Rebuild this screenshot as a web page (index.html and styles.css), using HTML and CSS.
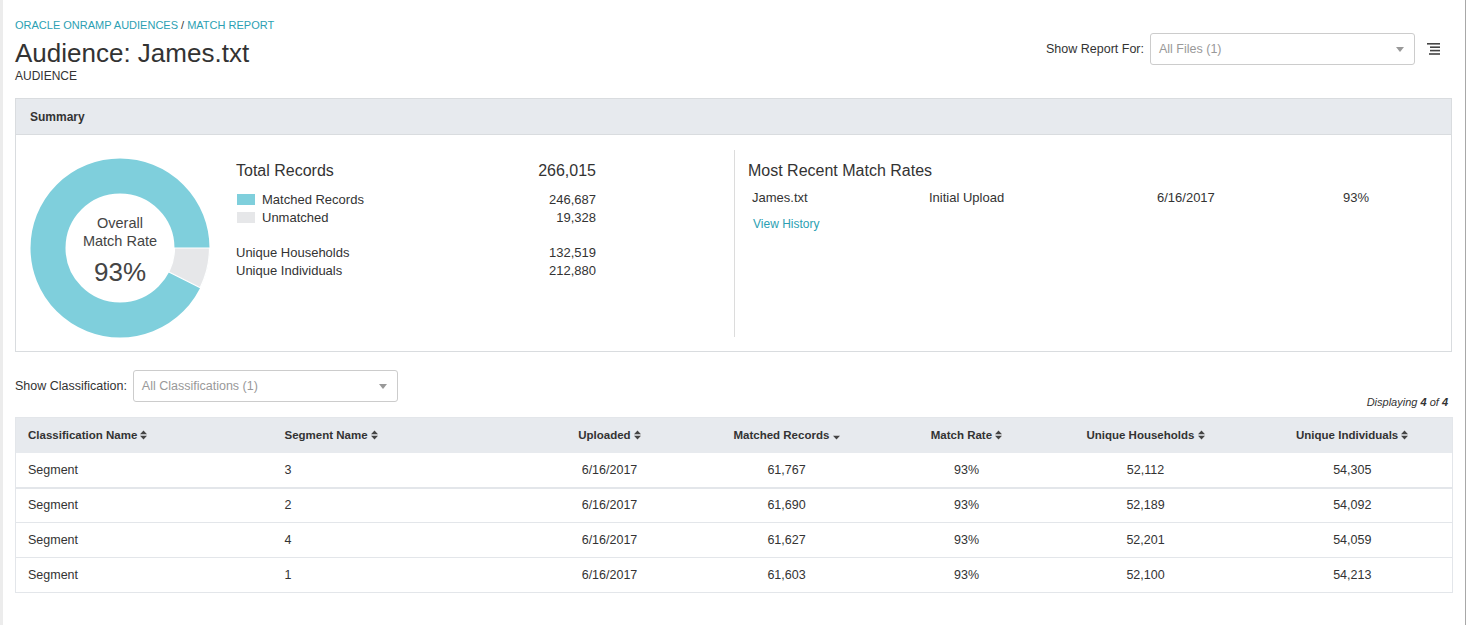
FILE: index.html
```html
<!DOCTYPE html>
<html>
<head>
<meta charset="utf-8">
<link rel="stylesheet" href="styles.css">
</head>
<body>
<div class="page">
  <header class="top">
    <div class="titles">
      <div class="crumbs"><a>ORACLE ONRAMP AUDIENCES</a> / <a>MATCH REPORT</a></div>
      <h1>Audience: James.txt</h1>
      <div class="subtitle">AUDIENCE</div>
    </div>
    <div class="top-right">
      <span class="label">Show Report For:</span>
      <div class="select select-files"><span>All Files (1)</span><i class="caret"></i></div>
      <svg class="menu-icon" width="13" height="12" viewBox="0 0 13 12">
        <rect x="0" y="0" width="13" height="1.6" fill="#444"/>
        <rect x="3" y="3.4" width="10" height="1.6" fill="#444"/>
        <rect x="3" y="6.8" width="10" height="1.6" fill="#444"/>
        <rect x="2" y="10.2" width="11" height="1.6" fill="#444"/>
      </svg>
    </div>
  </header>

  <section class="panel">
    <div class="panel-head">Summary</div>
    <div class="panel-body">
      <div class="donut">
        <svg width="180" height="180" viewBox="0 0 180 180">
          <circle cx="90" cy="90" r="72" fill="none" stroke="#7fcfdc" stroke-width="35"/>
          <path d="M179.5 90 A89.5 89.5 0 0 1 170.2 129.7 L138.9 114.1 A54.5 54.5 0 0 0 144.5 90 Z" fill="#e6e7e9" stroke="#fff" stroke-width="1.2"/>
        </svg>
        <div class="donut-text">
          <div class="dl">Overall</div>
          <div class="dl">Match Rate</div>
          <div class="dpct">93%</div>
        </div>
      </div>
      <div class="stats">
        <div class="stat-total"><span>Total Records</span><span>266,015</span></div>
        <div class="stat-row first"><span><i class="sw sw-teal"></i>Matched Records</span><span>246,687</span></div>
        <div class="stat-row"><span><i class="sw sw-grey"></i>Unmatched</span><span>19,328</span></div>
        <div class="stat-row gap"><span>Unique Households</span><span>132,519</span></div>
        <div class="stat-row"><span>Unique Individuals</span><span>212,880</span></div>
      </div>
      <div class="recent">
        <div class="recent-title">Most Recent Match Rates</div>
        <div class="recent-row"><span>James.txt</span><span>Initial Upload</span><span>6/16/2017</span><span>93%</span></div>
        <a class="history">View History</a>
      </div>
    </div>
  </section>

  <div class="toolbar">
    <div class="tool-left">
      <span class="label">Show Classification:</span>
      <div class="select select-class"><span>All Classifications (1)</span><i class="caret"></i></div>
    </div>
    <div class="displaying">Displaying <b>4</b> of <b>4</b></div>
  </div>

  <table class="grid">
    <colgroup>
      <col style="width:257px"><col style="width:268px"><col style="width:138px"><col style="width:216px"><col style="width:144px"><col style="width:214px"><col style="width:200px">
    </colgroup>
    <thead>
      <tr>
        <th class="l">Classification Name <svg class="sort" width="7" height="10" viewBox="0 0 7 10"><path d="M0 4.2h7L3.5 0.4z M0 5.8h7L3.5 9.6z"/></svg></th>
        <th class="l">Segment Name <svg class="sort" width="7" height="10" viewBox="0 0 7 10"><path d="M0 4.2h7L3.5 0.4z M0 5.8h7L3.5 9.6z"/></svg></th>
        <th>Uploaded <svg class="sort" width="7" height="10" viewBox="0 0 7 10"><path d="M0 4.2h7L3.5 0.4z M0 5.8h7L3.5 9.6z"/></svg></th>
        <th>Matched Records <svg class="sort" width="7" height="10" viewBox="0 0 7 10"><path d="M0 5.8h7L3.5 9.6z"/></svg></th>
        <th>Match Rate <svg class="sort" width="7" height="10" viewBox="0 0 7 10"><path d="M0 4.2h7L3.5 0.4z M0 5.8h7L3.5 9.6z"/></svg></th>
        <th>Unique Households <svg class="sort" width="7" height="10" viewBox="0 0 7 10"><path d="M0 4.2h7L3.5 0.4z M0 5.8h7L3.5 9.6z"/></svg></th>
        <th>Unique Individuals <svg class="sort" width="7" height="10" viewBox="0 0 7 10"><path d="M0 4.2h7L3.5 0.4z M0 5.8h7L3.5 9.6z"/></svg></th>
      </tr>
    </thead>
    <tbody>
      <tr><td class="l">Segment</td><td class="l">3</td><td>6/16/2017</td><td>61,767</td><td>93%</td><td>52,112</td><td>54,305</td></tr>
      <tr><td class="l">Segment</td><td class="l">2</td><td>6/16/2017</td><td>61,690</td><td>93%</td><td>52,189</td><td>54,092</td></tr>
      <tr><td class="l">Segment</td><td class="l">4</td><td>6/16/2017</td><td>61,627</td><td>93%</td><td>52,201</td><td>54,059</td></tr>
      <tr><td class="l">Segment</td><td class="l">1</td><td>6/16/2017</td><td>61,603</td><td>93%</td><td>52,100</td><td>54,213</td></tr>
    </tbody>
  </table>
</div>
</body>
</html>
```

FILE: styles.css
```css
* { box-sizing: border-box; }
html, body { margin: 0; padding: 0; background: #fff; }
body {
  font-family: "Liberation Sans", Arial, Helvetica, sans-serif;
  color: #333;
}
.page {
  width: 1466px;
  min-height: 625px;
  border-left: 3px solid #ececec;
  border-right: 1px solid #a8a8a8;
  padding: 19px 13px 0 12px;
}
.top {
  display: flex;
  justify-content: space-between;
  align-items: flex-start;
}
.crumbs {
  font-size: 11px;
  line-height: 13px;
  color: #333;
}
.crumbs a { color: #2c9fb3; }
h1 {
  margin: 6px 0 0;
  font-size: 26px;
  line-height: 30px;
  font-weight: normal;
  color: #333;
}
.subtitle {
  margin-top: 1px;
  font-size: 12px;
  line-height: 14px;
}
.top-right {
  display: flex;
  align-items: center;
  margin-top: 14px;
}
.label {
  font-size: 12.5px;
  color: #333;
}
.select {
  display: flex;
  align-items: center;
  justify-content: space-between;
  height: 32px;
  border: 1px solid #ccc;
  border-radius: 3px;
  padding: 0 10px 0 8px;
  font-size: 12.5px;
  color: #999;
  background: #fff;
}
.caret {
  width: 0; height: 0;
  border-left: 4.5px solid transparent;
  border-right: 4.5px solid transparent;
  border-top: 5px solid #999;
}
.select-files { width: 265px; margin-left: 6px; }
.menu-icon { margin-left: 12px; margin-right: 12px; }

.panel {
  margin-top: 15px;
  border: 1px solid #d9dcdf;
}
.panel-head {
  height: 36px;
  background: #e7eaee;
  border-bottom: 1px solid #d9dcdf;
  padding-left: 14px;
  font-size: 12px;
  font-weight: bold;
  line-height: 36px;
  color: #333;
}
.panel-body {
  display: flex;
  padding: 15px 14px 14px;
  height: 216px;
}
.donut {
  position: relative;
  width: 180px;
  height: 180px;
  margin-top: 8px;
  flex: none;
}
.donut svg { display: block; }
.donut-text {
  position: absolute;
  inset: 0;
  display: flex;
  flex-direction: column;
  align-items: center;
  justify-content: center;
  color: #444;
  padding-top: 5px;
}
.dl { font-size: 14.5px; line-height: 18px; }
.dpct { font-size: 26px; line-height: 30px; margin-top: 7px; }

.stats {
  width: 360px;
  margin-left: 26px;
  padding-top: 11px;
  flex: none;
}
.stat-total {
  display: flex;
  justify-content: space-between;
  font-size: 16px;
  line-height: 20px;
}
.stat-row {
  display: flex;
  justify-content: space-between;
  font-size: 13px;
  line-height: 17.5px;
}
.stat-row span:first-child { display: flex; align-items: center; }
.stat-row.first { margin-top: 10px; }
.stat-row.gap { margin-top: 18px; }
.sw { display: inline-block; width: 18px; height: 11px; margin-right: 7px; margin-left: 1px; }
.sw-teal { background: #7fcfdc; }
.sw-grey { background: #e6e7e9; }

.recent {
  margin-left: 138px;
  border-left: 1px solid #dcdcdc;
  padding: 11px 0 0 13px;
  flex: 1;
}
.recent-title { font-size: 16px; line-height: 20px; }
.recent-row {
  display: grid;
  grid-template-columns: 177px 228px 186px auto;
  margin-top: 8px;
  padding-left: 4px;
  font-size: 13px;
  line-height: 18px;
}
.history {
  display: block;
  margin-top: 9px;
  padding-left: 5px;
  font-size: 12px;
  line-height: 16px;
  color: #2c9fb3;
}

.toolbar {
  display: flex;
  justify-content: space-between;
  align-items: flex-end;
  margin-top: 18px;
}
.tool-left { display: flex; align-items: center; }
.select-class { width: 265px; margin-left: 6px; }
.displaying {
  font-size: 11px;
  font-style: italic;
  line-height: 14px;
  margin-bottom: -7px;
  margin-right: 4px;
}
.displaying b { font-weight: bold; }

.grid {
  width: 1437px;
  margin-top: 15px;
  border-collapse: collapse;
  table-layout: fixed;
  border: 1px solid #e3e6ea;
}
.grid th {
  height: 35px;
  background: #e7eaee;
  font-size: 11.5px;
  font-weight: bold;
  color: #333;
  text-align: center;
  padding: 0 12px;
}
.grid td {
  height: 35px;
  font-size: 12.5px;
  text-align: center;
  padding: 0 12px;
  border-bottom: 1px solid #e3e6ea;
}
.grid tbody tr:first-child td { border-bottom: 2px solid #e3e6ea; }
.grid .l { text-align: left; }
.sort { fill: #444; vertical-align: -1px; }
```
